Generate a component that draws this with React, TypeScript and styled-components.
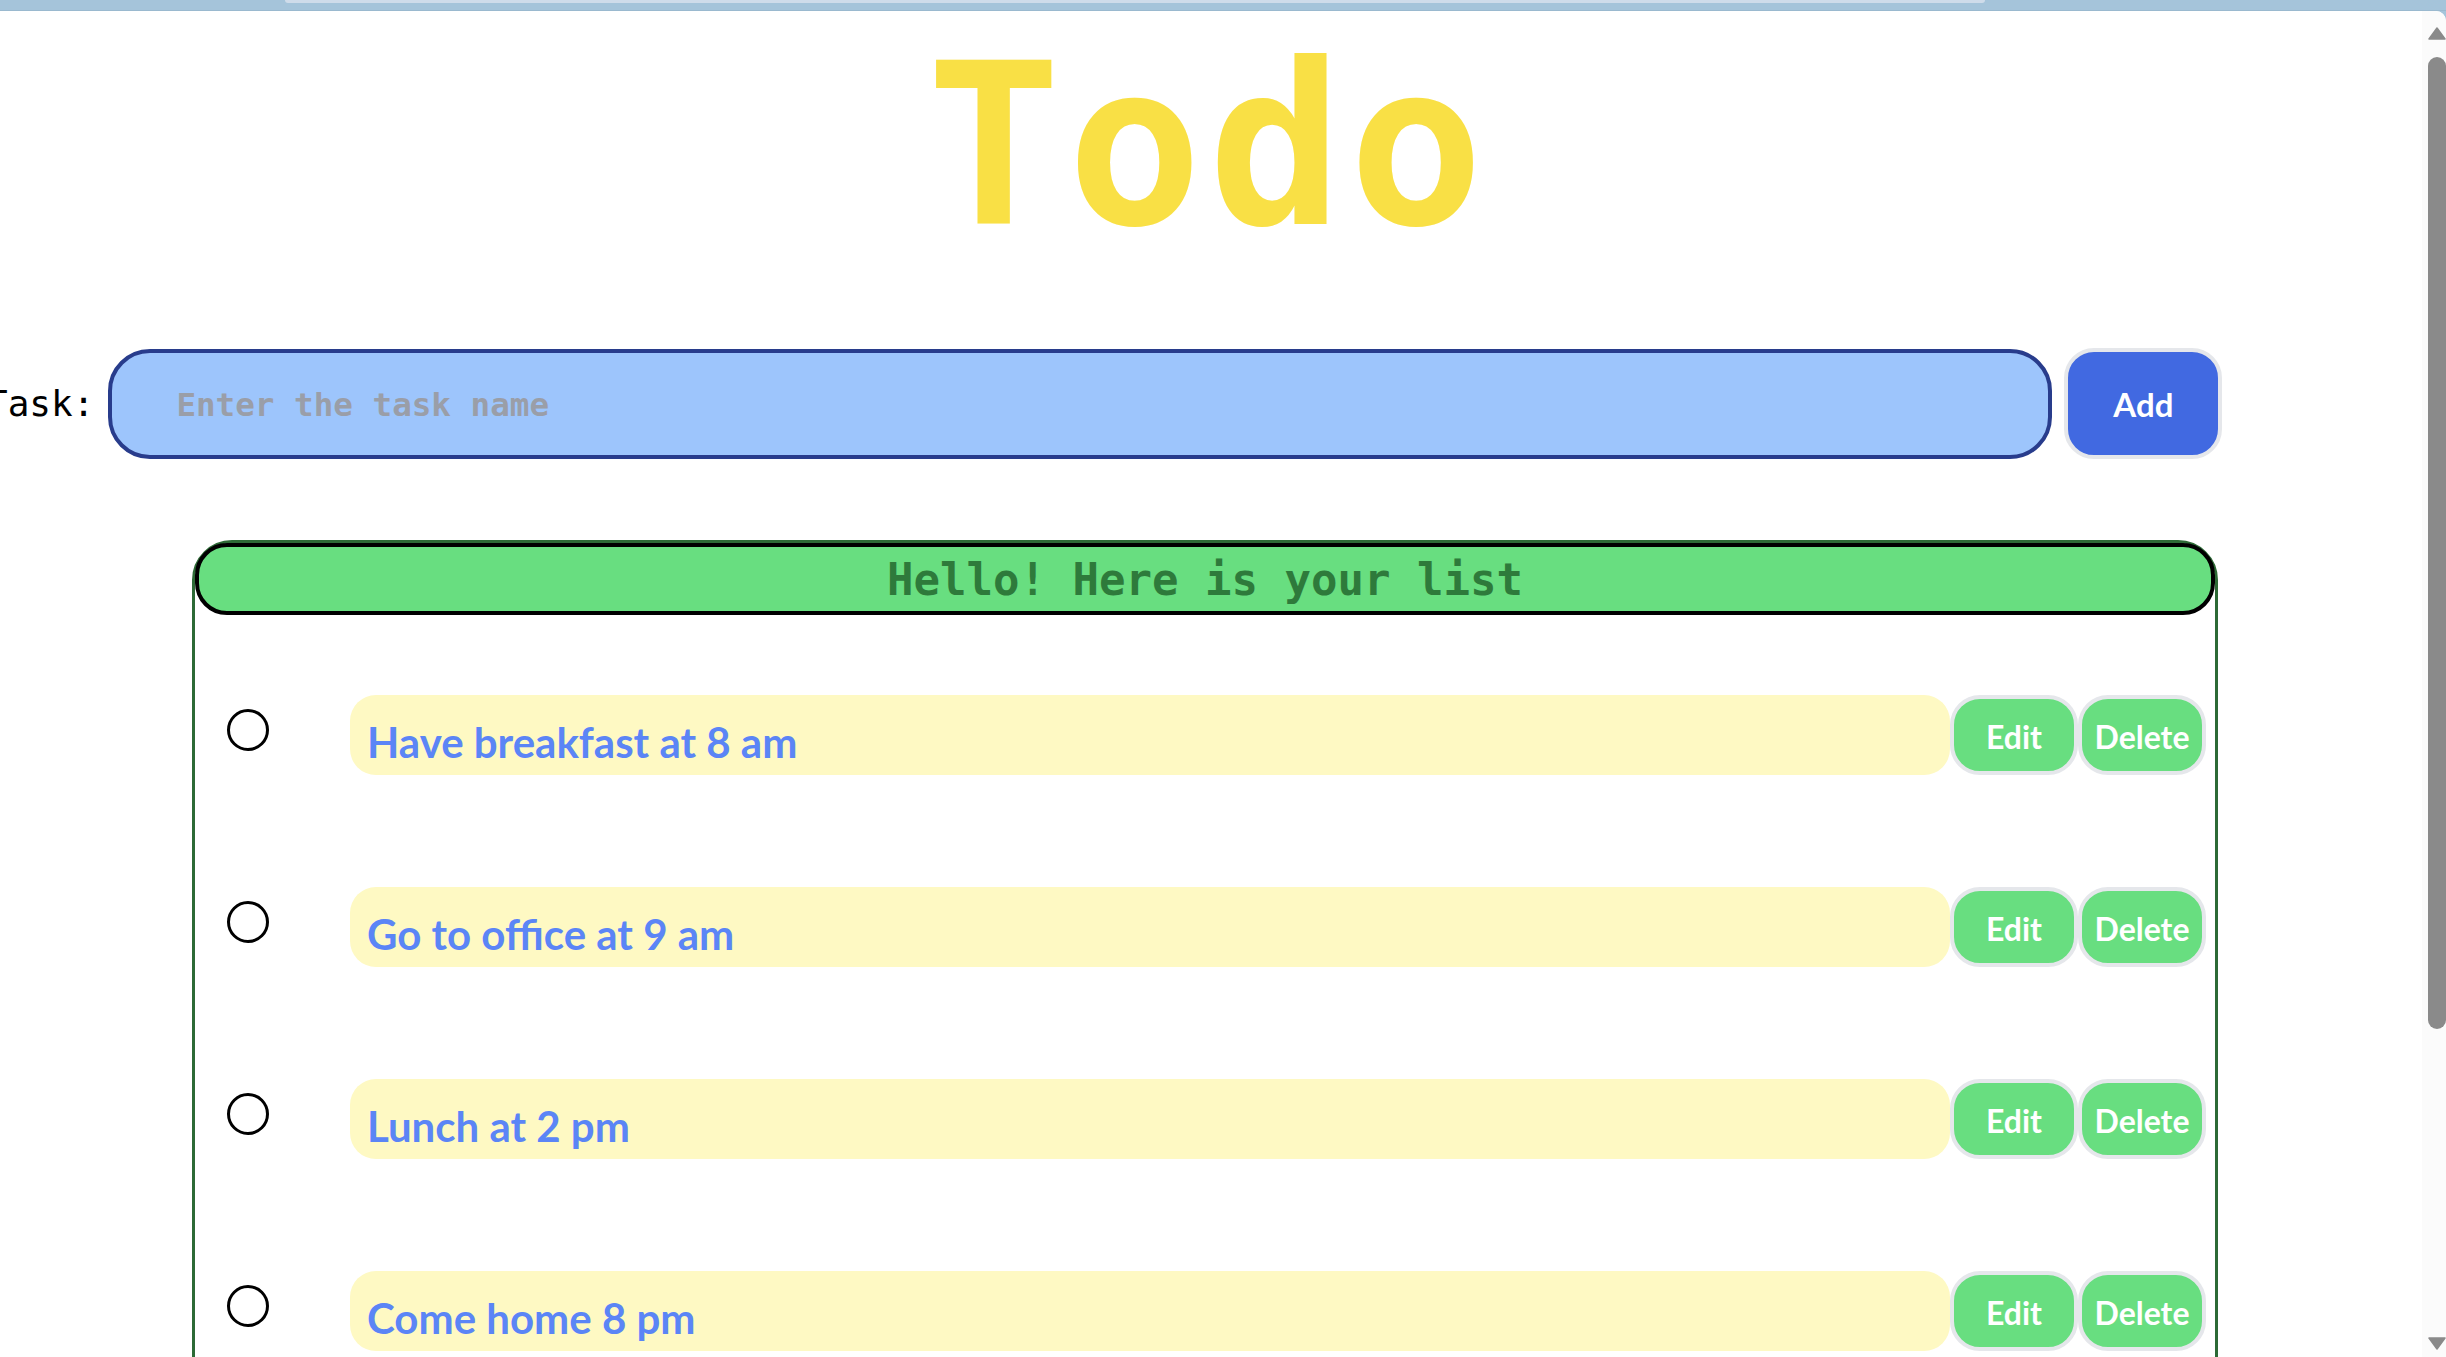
import React from "react";
import styled, { createGlobalStyle } from "styled-components";

const GlobalStyle = createGlobalStyle`
  html, body {
    margin: 0;
    padding: 0;
    overflow: hidden;
    background: #ffffff;
  }
  * { box-sizing: border-box; }
`;

const Frame = styled.div`
  height: 100vh;
  display: flex;
  flex-direction: column;
  background: #a5c4da;
`;

const TopBar = styled.div`
  height: 11px;
  flex-shrink: 0;
  display: flex;
  align-items: flex-start;
  border-bottom: 1px solid #9ab9cf;
`;

const BarTab = styled.div`
  margin-left: 285px;
  width: 1700px;
  height: 3px;
  background: #cfdcea;
  border-radius: 0 0 5px 5px;
`;

const Viewport = styled.div`
  flex: 1;
  display: flex;
  background: #ffffff;
  border-top-right-radius: 10px;
  overflow: hidden;
`;

const Main = styled.main`
  flex: 1;
  min-width: 0;
  overflow: hidden;
  padding-right: 12px;
`;

const Title = styled.h1`
  margin: 24px 0 0;
  padding-left: 6px;
  text-align: center;
  font-family: "DejaVu Sans Mono", "Liberation Mono", monospace;
  font-weight: 700;
  font-size: 224px;
  line-height: 224px;
  letter-spacing: 6px;
  color: #f9e045;
`;

const FormRow = styled.form`
  margin: 89px 0 0 -14px;
  display: flex;
  align-items: center;
`;

const Label = styled.label`
  font-family: "DejaVu Sans Mono", "Liberation Mono", monospace;
  font-size: 36px;
  color: #000000;
  margin-right: 14px;
  white-space: nowrap;
`;

const TaskInput = styled.input`
  width: 1944px;
  height: 110px;
  flex-shrink: 0;
  border: 4px solid #283c8c;
  border-radius: 42px;
  background: #9dc5fc;
  padding: 3px 20px 0 64px;
  font-family: "DejaVu Sans Mono", "Liberation Mono", monospace;
  font-weight: 700;
  font-size: 32.6px;
  color: #1f2937;
  outline: none;
  &::placeholder {
    color: #9a9ea8;
  }
`;

const AddButton = styled.button`
  margin-left: 12px;
  width: 158px;
  height: 111px;
  flex-shrink: 0;
  border: 4px solid #e5e7eb;
  border-radius: 30px;
  background: #4169e1;
  color: #ffffff;
  font-family: "Lato", "Noto Sans", sans-serif;
  font-weight: 700;
  font-size: 33px;
  cursor: pointer;
`;

const ListBox = styled.section`
  margin: 81px auto 0;
  width: 2026px;
  border: 3px solid #2d6a36;
  border-radius: 40px;
  padding-bottom: 80px;
`;

const ListHeader = styled.h2`
  margin: 0;
  height: 72px;
  border: 4px solid #000000;
  border-radius: 32px;
  background: #68de80;
  color: #2e7a3b;
  text-align: center;
  font-family: "DejaVu Sans Mono", "Liberation Mono", monospace;
  font-weight: 700;
  font-size: 44px;
  line-height: 66px;
`;

const Items = styled.ul`
  list-style: none;
  margin: 0;
  padding: 80px 0 0;
  display: flex;
  flex-direction: column;
  gap: 112px;
`;

const Item = styled.li`
  display: flex;
  align-items: flex-start;
  padding: 0 9px 0 32px;
`;

const Radio = styled.span`
  width: 42px;
  height: 42px;
  flex-shrink: 0;
  margin: 14px 81px 0 0;
  border: 3px solid #000000;
  border-radius: 50%;
  background: #ffffff;
`;

const TaskText = styled.div`
  flex: 1;
  min-width: 0;
  height: 80px;
  background: #fef9c3;
  border-radius: 26px;
  padding: 12px 0 0 17px;
  font-family: "Lato", "Noto Sans", sans-serif;
  font-weight: 700;
  font-size: 42px;
  line-height: 71px;
  color: #5b85f6;
  white-space: nowrap;
  overflow: hidden;
`;

const ActionButton = styled.button`
  width: 128px;
  height: 80px;
  flex-shrink: 0;
  border: 4px solid #e5e7eb;
  border-radius: 30px;
  background: #68de80;
  color: #ffffff;
  font-family: "Lato", "Noto Sans", sans-serif;
  font-weight: 700;
  font-size: 32px;
  padding: 2px 0 0;
  cursor: pointer;
`;

const Scrollbar = styled.div`
  width: 24px;
  flex-shrink: 0;
  background: #fbfbfb;
  display: flex;
  flex-direction: column;
  padding: 16px 0 7px 6px;
`;

const Arrow = styled.svg`
  width: 18px;
  height: 13px;
  flex-shrink: 0;
  display: block;
`;

const Thumb = styled.div`
  margin-top: 17px;
  height: 972px;
  width: 18px;
  border-radius: 9px;
  background: #8a8a8a;
`;

const Spacer = styled.div`
  flex: 1;
`;

const tasks = [
  "Have breakfast at 8 am",
  "Go to office at 9 am",
  "Lunch at 2 pm",
  "Come home 8 pm",
];

export default function App() {
  return (
    <>
      <GlobalStyle />
      <Frame>
        <TopBar>
          <BarTab />
        </TopBar>
        <Viewport>
          <Main>
            <Title>Todo</Title>
            <FormRow onSubmit={(e) => e.preventDefault()}>
              <Label htmlFor="task">Task:</Label>
              <TaskInput id="task" type="text" placeholder="Enter the task name" />
              <AddButton type="submit">Add</AddButton>
            </FormRow>
            <ListBox>
              <ListHeader>Hello! Here is your list</ListHeader>
              <Items>
                {tasks.map((t) => (
                  <Item key={t}>
                    <Radio />
                    <TaskText>{t}</TaskText>
                    <ActionButton>Edit</ActionButton>
                    <ActionButton>Delete</ActionButton>
                  </Item>
                ))}
              </Items>
            </ListBox>
          </Main>
          <Scrollbar>
            <Arrow viewBox="0 0 18 13">
              <polygon points="9,1 17,12 1,12" fill="#8a8a8a" stroke="#8a8a8a" strokeWidth="1.5" strokeLinejoin="round" />
            </Arrow>
            <Thumb />
            <Spacer />
            <Arrow viewBox="0 0 18 13">
              <polygon points="1,1 17,1 9,12" fill="#8a8a8a" stroke="#8a8a8a" strokeWidth="1.5" strokeLinejoin="round" />
            </Arrow>
          </Scrollbar>
        </Viewport>
      </Frame>
    </>
  );
}
